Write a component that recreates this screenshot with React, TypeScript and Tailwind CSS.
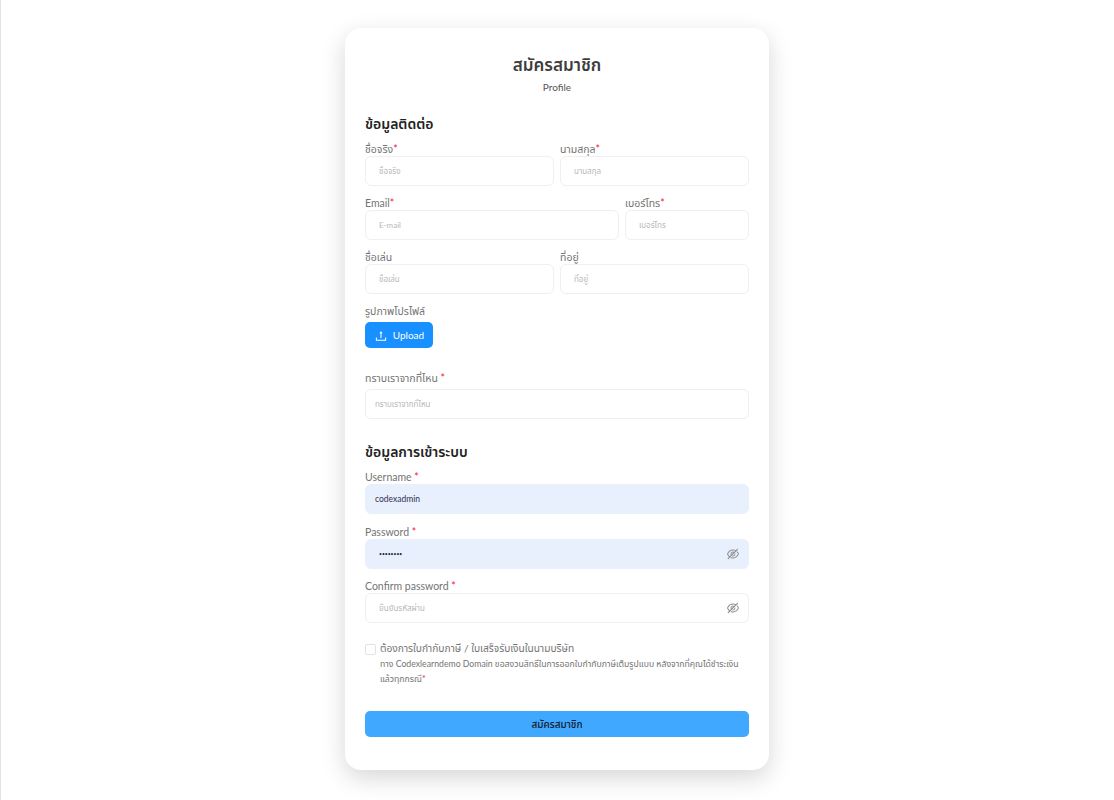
import React from 'react';
import { AiOutlineUpload, AiOutlineEyeInvisible } from 'react-icons/ai';

const fontStack = { fontFamily: 'Lato, "Noto Sans", "Noto Sans Thai", "Liberation Sans", sans-serif' };

const Label: React.FC<{ text: string; spaced?: boolean; required?: boolean }> = ({ text, spaced, required = true }) => (
  <label className="block h-[14px] text-[10.5px] leading-[14px] text-[#747474] whitespace-nowrap">
    {text}
    {required && <span className="text-[#f5222d]">{spaced ? ' *' : '*'}</span>}
  </label>
);

const Input: React.FC<{
  placeholder?: string;
  value?: string;
  filled?: boolean;
  secret?: boolean;
  pad?: string;
  eye?: boolean;
}> = ({ placeholder, value, filled, secret, pad = 'pl-[13px]', eye }) => (
  <div
    className={`flex h-[30px] items-center justify-between rounded-[6px] border pr-[8px] ${pad} ${
      filled ? 'border-[#e8f0fe] bg-[#e8f0fe]' : 'border-[#efefef] bg-white'
    }`}
  >
    {secret ? (
      <span className="text-[5px] leading-none whitespace-nowrap text-[#1f1f3a]">{value}</span>
    ) : (
      <span className={`leading-none whitespace-nowrap ${filled ? 'text-[8.5px] text-[#2f2f4f]' : 'text-[8px] text-[#b8b8b8]'}`}>
        {value ?? placeholder}
      </span>
    )}
    {eye && <AiOutlineEyeInvisible className="text-[14px] text-[#8a8a8a]" />}
  </div>
);

const App: React.FC = () => {
  return (
    <div style={fontStack} className="min-h-[800px] border-l border-[#e4e4e4] bg-white pt-[28px] pb-[30px]">
      <div className="ml-[344px] h-[742px] w-[424px] rounded-[16px] bg-white px-[20px] pt-[25px] shadow-[0_8px_24px_rgba(0,0,0,0.16)]">
        <h1 className="h-[24px] text-center text-[17px] leading-[24px] font-semibold text-[#3d3d3d]">สมัครสมาชิก</h1>
        <p className="mt-[3px] h-[14px] text-center text-[10px] leading-[14px] text-[#555]">Profile</p>

        <h2 className="mt-[19px] h-[22px] text-[14px] leading-[22px] font-semibold text-[#222]">ข้อมูลติดต่อ</h2>

        <div className="mt-[7px] grid grid-cols-[189px_189px] gap-x-[6px]">
          <div>
            <Label text="ชื่อจริง" />
            <Input placeholder="ชื่อจริง" />
          </div>
          <div>
            <Label text="นามสกุล" />
            <Input placeholder="นามสกุล" />
          </div>
        </div>

        <div className="mt-[10px] grid grid-cols-[254px_124px] gap-x-[6px]">
          <div>
            <Label text="Email" />
            <Input placeholder="E-mail" />
          </div>
          <div>
            <Label text="เบอร์โทร" />
            <Input placeholder="เบอร์โทร" />
          </div>
        </div>

        <div className="mt-[10px] grid grid-cols-[189px_189px] gap-x-[6px]">
          <div>
            <Label text="ชื่อเล่น" required={false} />
            <Input placeholder="ชื่อเล่น" />
          </div>
          <div>
            <Label text="ที่อยู่" required={false} />
            <Input placeholder="ที่อยู่" />
          </div>
        </div>

        <div className="mt-[10px]">
          <Label text="รูปภาพโปรไฟล์" required={false} />
          <button className="mt-[4px] flex h-[26px] w-[68px] items-center justify-center gap-[5px] rounded-[5px] bg-[#1890ff] pt-[1px] text-[10px] text-white">
            <AiOutlineUpload className="text-[14px]" />
            Upload
          </button>
        </div>

        <div className="mt-[23px]">
          <Label text="ทราบเราจากที่ไหน" spaced />
          <div className="mt-[4px]">
            <Input placeholder="ทราบเราจากที่ไหน" pad="pl-[9px]" />
          </div>
        </div>

        <h2 className="mt-[22px] h-[22px] text-[14px] leading-[22px] font-semibold text-[#222]">ข้อมูลการเข้าระบบ</h2>

        <div className="mt-[7px]">
          <Label text="Username" spaced />
          <Input value="codexadmin" filled pad="pl-[9px]" />
        </div>
        <div className="mt-[11px]">
          <Label text="Password" spaced />
          <Input value="••••••••" filled secret eye />
        </div>
        <div className="mt-[10px]">
          <Label text="Confirm password" spaced />
          <Input placeholder="ยืนยันรหัสผ่าน" eye />
        </div>

        <div className="mt-[18px] flex gap-[4px]">
          <span className="mt-[3px] h-[11px] w-[11px] shrink-0 rounded-[2px] border border-[#e2e2e2] bg-white" />
          <div>
            <p className="h-[14px] text-[10.2px] leading-[14px] text-[#747474]">ต้องการใบกำกับภาษี / ใบเสร็จรับเงินในนามบริษัท</p>
            <p className="mt-[1px] text-[8.7px] leading-[15px] text-[#747474]">
              ทาง Codexlearndemo Domain ขอสงวนสิทธิ์ในการออกใบกำกับภาษีเต็มรูปแบบ หลังจากที่คุณได้ชำระเงิน
              <br />
              แล้วทุกกรณี
              <span className="text-[#f5222d]">*</span>
            </p>
          </div>
        </div>

        <button className="mt-[25px] h-[26px] w-full rounded-[5px] bg-[#40a9ff] text-[10px] font-medium text-[#111a2c]">
          สมัครสมาชิก
        </button>
      </div>
    </div>
  );
};

export default App;
